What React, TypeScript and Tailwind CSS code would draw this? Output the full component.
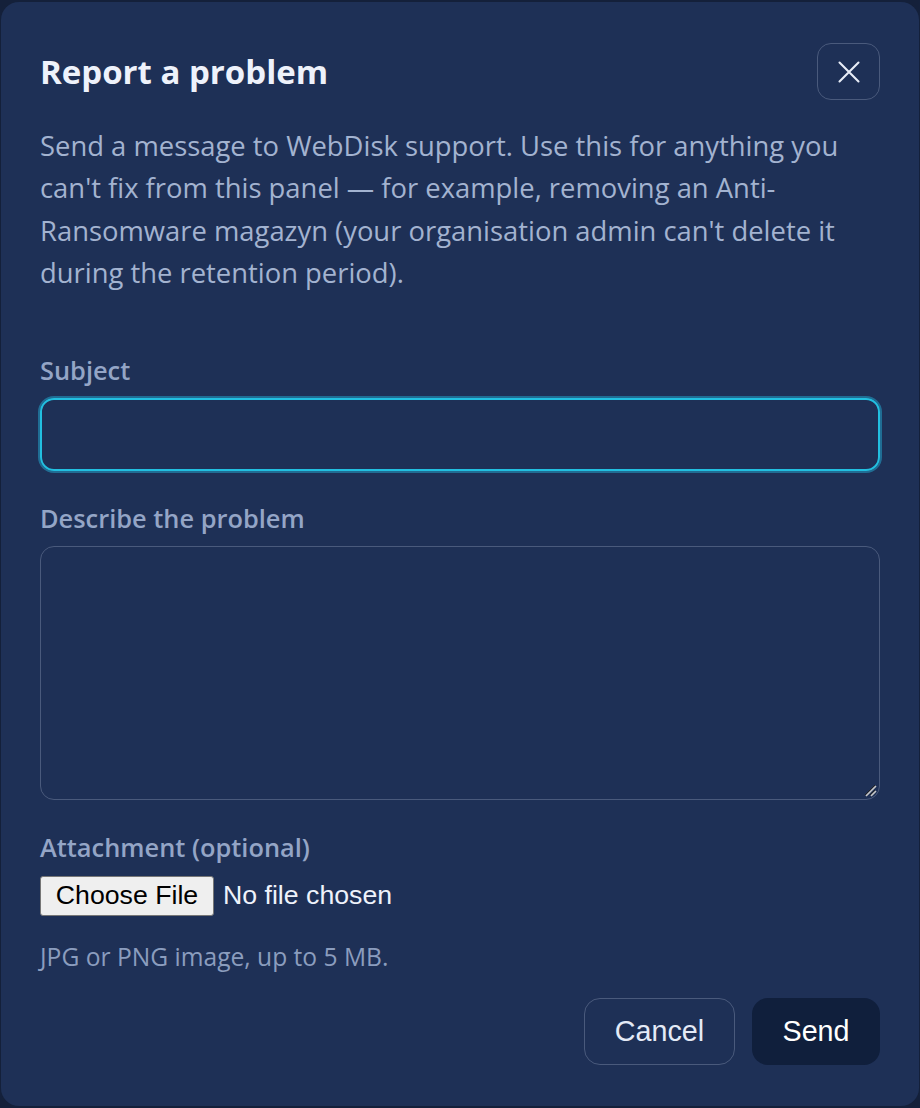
import React from "react";

const sans = '"Open Sans", "Noto Sans", sans-serif';
const arial = '"Liberation Sans", Arial, sans-serif';

export default function App() {
  return (
    <div className="min-h-[1108px] w-[920px] bg-[#14203a] pt-[2px] pl-[1px] pr-[1px] pb-[2px]" style={{ fontFamily: sans }}>
      <div className="flex h-[1104px] w-[918px] flex-col rounded-[18px] bg-[#1e3056] pl-[39px] pr-[39px] pt-[41px]">
        <div className="flex items-start justify-between">
          <h1 className="mt-[7px] text-[33px] font-bold leading-[44px] text-[#eef2fb]">Report a problem</h1>
          <button className="flex h-[57px] w-[63px] items-center justify-center rounded-[14px] border border-[#4a5a7c] text-[#e8edf7]">
            <svg width="38" height="38" viewBox="0 0 24 24" fill="none" stroke="currentColor" strokeWidth="1.3" strokeLinecap="round">
              <path d="M18 6 6 18M6 6l12 12" />
            </svg>
          </button>
        </div>
        <p className="mt-[25px] text-[27.4px] leading-[42.4px] text-[#a3b3d0]">
          <span className="block whitespace-nowrap">Send a message to WebDisk support. Use this for anything you</span>
          <span className="block whitespace-nowrap">can't fix from this panel — for example, removing an Anti-</span>
          <span className="block whitespace-nowrap">Ransomware magazyn (your organisation admin can't delete it</span>
          <span className="block whitespace-nowrap">during the retention period).</span>
        </p>

        <label className="mt-[58px] block text-[25.4px] font-semibold leading-[34px] text-[#94a5c6]">Subject</label>
        <div className="mt-[11px] h-[73px] rounded-[14px] border-2 border-[#22bfe0] shadow-[0_0_0_2px_rgba(34,160,200,0.55)]" />

        <label className="mt-[30px] block text-[25.4px] font-semibold leading-[34px] text-[#94a5c6]">Describe the problem</label>
        <div className="relative mt-[11px] h-[254px] rounded-[14px] border border-[#4a5a7c]">
          <svg className="absolute bottom-[2px] right-[2px]" width="14" height="14" viewBox="0 0 14 14">
            <path d="M13 3 3 13M13 8 8 13" stroke="#c8c8c8" strokeWidth="1.6" />
            <path d="M12 2 2 12M12 7 7 12" stroke="#222" strokeWidth="1" />
          </svg>
        </div>

        <label className="mt-[30px] block text-[25.4px] font-semibold leading-[34px] text-[#94a5c6]">Attachment (optional)</label>
        <div className="mt-[12px] flex items-center" style={{ fontFamily: arial }}>
          <span className="flex h-[40px] w-[174px] items-center justify-center rounded-[3px] border border-[#767676] bg-[#efefef] text-[26.7px] leading-none text-black">Choose File</span>
          <span className="ml-[9px] text-[26.7px] leading-none text-[#eef2fb]">No file chosen</span>
        </div>
        <p className="mt-[25px] text-[24.6px] leading-[32px] text-[#8b9dbe]">JPG or PNG image, up to 5 MB.</p>

        <div className="mt-[25px] flex justify-end gap-[17px]" style={{ fontFamily: arial }}>
          <button className="h-[67px] w-[151px] rounded-[16px] border border-[#4a5a7c] text-[28.7px] text-[#e4eaf6]">Cancel</button>
          <button className="h-[67px] w-[128px] rounded-[16px] bg-[#101f3c] text-[28.7px] text-white">Send</button>
        </div>
      </div>
    </div>
  );
}
